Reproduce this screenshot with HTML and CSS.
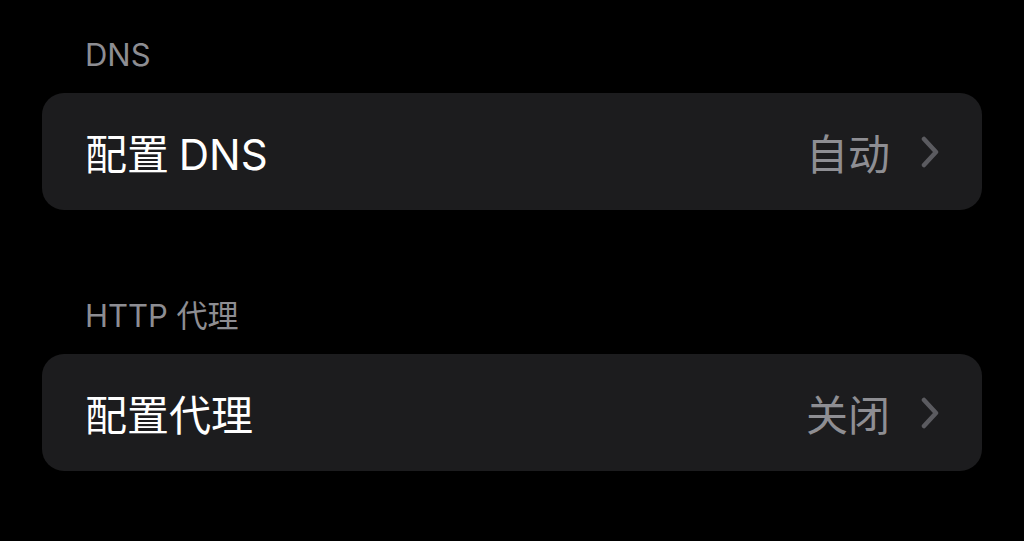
FILE: index.html
```html
<!DOCTYPE html>
<html lang="zh-CN">
<head>
    <meta charset="UTF-8">
    <meta name="viewport" content="width=device-width, initial-scale=1.0">
    <title>网络设置</title>
    <link rel="stylesheet" href="styles.css">
</head>
<body>
    <div class="settings">
        <div class="section">
            <p class="section-title">DNS</p>
            <div class="card">
                <div class="row">
                    <span class="label">配置 DNS</span>
                    <span class="value">自动</span>
                    <svg class="chevron" viewBox="0 0 20 32" width="20" height="32">
                        <path d="M4 3 L16 16 L4 29" fill="none" stroke="#5b5b60" stroke-width="4.5" stroke-linecap="round" stroke-linejoin="round"/>
                    </svg>
                </div>
            </div>
        </div>

        <div class="section">
            <p class="section-title">HTTP 代理</p>
            <div class="card">
                <div class="row">
                    <span class="label">配置代理</span>
                    <span class="value">关闭</span>
                    <svg class="chevron" viewBox="0 0 20 32" width="20" height="32">
                        <path d="M4 3 L16 16 L4 29" fill="none" stroke="#5b5b60" stroke-width="4.5" stroke-linecap="round" stroke-linejoin="round"/>
                    </svg>
                </div>
            </div>
        </div>
    </div>
</body>
</html>
```

FILE: styles.css
```css
body {
    margin: 0;
    background: #000;
    font-family: Inter, "Noto Sans CJK SC", sans-serif;
    color: #fff;
}
.settings {
    display: flex;
    flex-direction: column;
    gap: 87px;
    padding: 36px 42px 0;
}
.section-title {
    margin: 0 0 19px;
    padding-left: 43px;
    font-size: 31px;
    line-height: 38px;
    color: #8d8d92;
}
.card {
    background: #1c1c1e;
    border-radius: 22px;
}
.row {
    display: flex;
    align-items: center;
    height: 117px;
    padding: 0 42px 0 43px;
}
.label {
    flex: 1;
    font-size: 42px;
    color: #fff;
    word-spacing: -2px;
}
.value {
    font-size: 42px;
    color: #8e8e93;
    margin-right: 30px;
}
.chevron {
    display: block;
}
```
